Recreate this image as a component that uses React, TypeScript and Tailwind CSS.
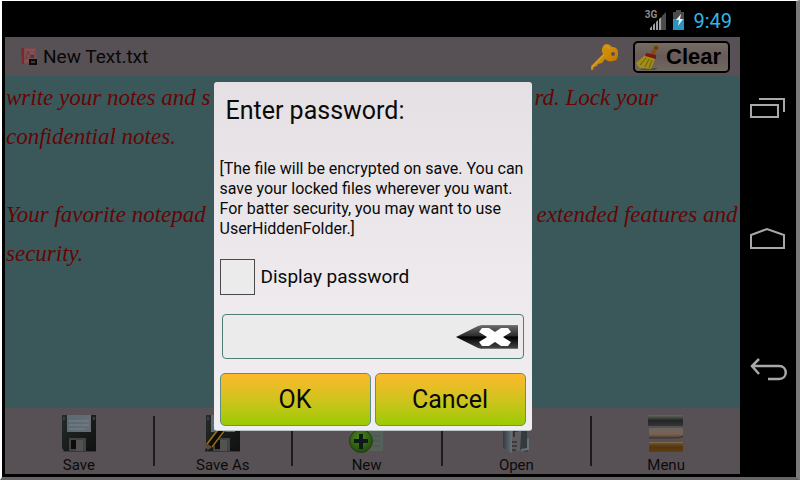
import type { ReactNode } from "react";

function SaveIcon({ pencil = false }: { pencil?: boolean }) {
  return (
    <svg className="h-10 w-9" viewBox="0 0 36 40" aria-hidden="true">
      <defs>
        <linearGradient id="disk" x1="0" y1="0" x2="1" y2="1">
          <stop offset="0" stopColor="#262a2a" />
          <stop offset="0.6" stopColor="#171a19" />
          <stop offset="1" stopColor="#101211" />
        </linearGradient>
        <linearGradient id="diskLabel" x1="0" y1="0" x2="1" y2="0">
          <stop offset="0" stopColor="#5b6a73" />
          <stop offset="1" stopColor="#666c72" />
        </linearGradient>
      </defs>
      <path d="M1 1h34v36H3l-2-3z" fill="url(#disk)" />
      <path d="M1 37h34v1H3z" fill="#3d3838" />
      <path d="M6 1h24v17H6z" fill="url(#diskLabel)" />
      <path d="M8 7h20M8 11h20M8 15h16" stroke="#77858e" strokeWidth="1" />
      <path d="M2 3h2v3H2zM32 3h2v3h-2z" fill="#3b403f" />
      <path d="M8 24h17v13H8z" fill="#434343" />
      <path d="M10 26h5v9h-5z" fill="#0b0b0b" />
      <path d="M15 26h7v11h-7z" fill="#535151" />
      {pencil && (
        <g>
          <path d="M1 29L17 9l7 4L8 33z" fill="#0c0b09" />
          <path d="M2 30L18 9" stroke="#8f6c1b" strokeWidth="2" />
          <path d="M7 33L23 12" stroke="#8f6c1b" strokeWidth="1.500" />
          <path d="M1 29l6 4-7 5z" fill="#5c4b33" />
          <path d="M1 34l2 2-3 2z" fill="#111" />
        </g>
      )}
    </svg>
  );
}

function NewIcon() {
  return (
    <svg className="h-10 w-9" viewBox="0 0 36 40" aria-hidden="true">
      <defs>
        <radialGradient id="plus" cx="0.45" cy="0.35" r="0.7">
          <stop offset="0" stopColor="#4e8622" />
          <stop offset="1" stopColor="#1d4708" />
        </radialGradient>
      </defs>
      <path d="M8 4h26v33H14z" fill="#56605a" />
      <path d="M24 22h7M24 27h7M24 32h7" stroke="#49544e" />
      <circle cx="12" cy="27" r="11.500" fill="url(#plus)" stroke="#263d17" />
      <path d="M10 20h4v5h5v4h-5v6h-4v-6H5v-4h5z" fill="#0e1a17" />
    </svg>
  );
}

function OpenIcon() {
  return (
    <svg className="h-10 w-9" viewBox="0 0 36 40" aria-hidden="true">
      <defs>
        <linearGradient id="folder" x1="0" y1="0" x2="1" y2="0">
          <stop offset="0" stopColor="#343b42" />
          <stop offset="1" stopColor="#67727b" />
        </linearGradient>
      </defs>
      <path d="M12 4h17v33H12z" fill="#5e5c5f" />
      <path d="M5 4l9 8v27L5 34z" fill="url(#folder)" />
      <path d="M24 6h5v18l1 14-8-2z" fill="#333a40" />
      <path d="M29 25l2-1v12l-8 1v-2l6-1z" fill="#66717a" />
      <path d="M15 17h5M16 17v6M14 28h5M14 32h5M14 36h4" stroke="#1a1c1e" strokeWidth="1.200" />
    </svg>
  );
}

function MenuIcon() {
  return (
    <svg className="h-10 w-9" viewBox="0 0 36 40" aria-hidden="true">
      <defs>
        <linearGradient id="bar1" x1="0" y1="0" x2="0" y2="1">
          <stop offset="0" stopColor="#65675f" />
          <stop offset="0.5" stopColor="#222624" />
          <stop offset="1" stopColor="#333634" />
        </linearGradient>
        <linearGradient id="bar2" x1="0" y1="0" x2="0" y2="1">
          <stop offset="0" stopColor="#6a685f" />
          <stop offset="0.6" stopColor="#7b6152" />
          <stop offset="1" stopColor="#4d4039" />
        </linearGradient>
        <linearGradient id="bar3" x1="0" y1="0" x2="0" y2="1">
          <stop offset="0" stopColor="#705a38" />
          <stop offset="0.5" stopColor="#54350d" />
          <stop offset="1" stopColor="#5e4012" />
        </linearGradient>
      </defs>
      <rect x="0" y="1" width="35" height="11" rx="1" fill="url(#bar1)" />
      <rect x="1" y="14" width="34" height="10" rx="1" fill="url(#bar2)" />
      <path d="M1 24h27q4 0 7-2" stroke="#3a332e" fill="none" />
      <rect x="1" y="28" width="34" height="10" rx="1" fill="url(#bar3)" />
      <path d="M1 28.500h34" stroke="#7c6a48" />
    </svg>
  );
}

function FileIcon() {
  return (
    <svg className="h-5 w-4" viewBox="0 0 16 20" aria-hidden="true">
      <path d="M0 1h15v16H1z" fill="#7b4a4d" />
      <path d="M0 1h3v16H1z" fill="#742c31" />
      <path d="M4 3h10M5 6h8M5 9h3M4 14h4" stroke="#96575c" />
      <path d="M5 12l2-8 3 7" stroke="#643a45" fill="none" />
      <path d="M10 8h3v3h-3z" fill="#3f3861" />
      <path d="M8 12h8v6H8z" fill="#0d0b0c" />
      <path d="M10 15h4" stroke="#77706f" />
    </svg>
  );
}

function KeyIcon() {
  return (
    <svg className="h-7 w-8" viewBox="0 0 32 28" aria-hidden="true">
      <defs>
        <linearGradient id="key" x1="0" y1="0" x2="1" y2="1">
          <stop offset="0" stopColor="#c9951c" />
          <stop offset="0.5" stopColor="#cf8a04" />
          <stop offset="1" stopColor="#b86808" />
        </linearGradient>
      </defs>
      <path
        fillRule="evenodd"
        d="M15 2c2-2 6-1 8 2 4 0 6 2 6 6 0 5-1 8-5 8-3 1-6 0-8-2l-3 4-4 1-1 2-3 1-1 3H2v-4L14 11c-2-3-1-7 1-9zM24 9a2 2 0 1 0 .1 0z"
        fill="url(#key)"
      />
      <path d="M3 24L15 12M16 4c2-1 4 0 5 2" stroke="#d8a93a" fill="none" />
    </svg>
  );
}

function BroomIcon() {
  return (
    <svg className="h-7 w-7" viewBox="0 0 28 28" aria-hidden="true">
      <path d="M8 25h15l-3 2H5z" fill="#574c3d" />
      <path d="M15 11l3-5c0-4 4-5 6-2 1 2-1 3-3 4l-2 5z" fill="#7c5119" />
      <circle cx="21" cy="5" r="1" fill="#3f270a" />
      <path d="M10 12L1 20l2 3 2 2 11 1 4-10z" fill="#a08d17" />
      <path d="M11 15l-6 7M14 16l-4 8M17 17l-3 8" stroke="#6d5d08" />
      <path d="M11 10l10 2v4l-11-3z" fill="#7c1712" />
    </svg>
  );
}

function StatusIcons() {
  return (
    <div className="flex items-start text-[#8c8c8c]">
      <span className="text-[10px] leading-3 font-bold">3G</span>
      <svg className="-ml-2 h-6 w-9" viewBox="0 0 36 24" aria-hidden="true">
        <path d="M17 3v18h-4V7z" fill="#4c4c4c" />
        <path d="M1 19v2h2v-4zM4 16v5h2v-7zM7 13v8h2V11zM10 10v11h2.500V8z" fill="#a0a0a0" />
        <path d="M27 1h5v2h3v8H24V3h3z" fill="#4b4b4b" />
        <path d="M24 10h11v11H24z" fill="#2c93bd" />
        <path d="M32 5l-5 6h3l-1 6 5-7h-3z" fill="#e8f4f8" />
      </svg>
    </div>
  );
}

function BackspaceIcon() {
  return (
    <svg className="h-7 w-16" viewBox="0 0 64 28" aria-hidden="true">
      <defs>
        <linearGradient id="erase" x1="0" y1="0" x2="0" y2="1">
          <stop offset="0" stopColor="#6b6b6b" />
          <stop offset="0.450" stopColor="#2d2d2d" />
          <stop offset="0.500" stopColor="#000" />
          <stop offset="1" stopColor="#4a4a4a" />
        </linearGradient>
      </defs>
      <path d="M1 14L23 3l4-1h36v24H27l-4-1z" fill="url(#erase)" />
      <path d="M27 2.500h36M27 25.500h36" fill="none" stroke="#777" />
      <path
        d="M24 9l3-4h7l6 4 6-4h7l3 4-8 5 8 5-3 4h-7l-6-4-6 4h-7l-3-4 8-5z"
        fill="#fff"
      />
    </svg>
  );
}

function NavButton({ label, children }: { label: string; children: ReactNode }) {
  return (
    <button type="button" aria-label={label} className="flex h-8 w-10 items-center justify-center">
      <svg className="h-8 w-10" viewBox="0 0 40 32" fill="none" stroke="#a8a8a8" strokeWidth="2" aria-hidden="true">
        {children}
      </svg>
    </button>
  );
}

function Toolbar() {
  const item = "flex flex-1 flex-col items-center border-r-2 border-[#1d1a1c]";

  return (
    <nav className="flex h-[66px] bg-[#575054] py-2 text-[15px] leading-4 text-[#0c0b0b]">
      <button type="button" className={item}>
        <span className="-mt-0.5 mb-[3px]"><SaveIcon /></span>
        Save
      </button>
      <button type="button" className="flex w-[138px] flex-col items-center border-r-2 border-[#1d1a1c]">
        <span className="-mt-0.5 mb-[3px]"><SaveIcon pencil /></span>
        Save As
      </button>
      <button type="button" className={item}>
        <span className="-mt-0.5 mb-[3px]"><NewIcon /></span>
        New
      </button>
      <button type="button" className={item}>
        <span className="-mt-0.5 mb-[3px]"><OpenIcon /></span>
        Open
      </button>
      <button type="button" className="flex flex-1 flex-col items-center">
        <span className="-mt-0.5 mb-[3px]"><MenuIcon /></span>
        Menu
      </button>
    </nav>
  );
}

function PasswordDialog() {
  const button =
    "h-[53px] flex-1 rounded-[5px] border border-[#5f8f86] bg-linear-to-b from-[#fdb82c] to-[#9acb00] text-[25px] leading-8";

  return (
    <form
      role="dialog"
      aria-labelledby="dialog-title"
      className="w-[318px] rounded-[3px] border-b border-[#b9c8c4] bg-linear-to-b from-[#e4e0e3] via-[#ece8eb] to-[#f1edf1] px-1.5 pt-[13px] pb-1 text-[#0a0a0a]"
    >
      <h2 id="dialog-title" className="px-1.5 text-[25px] leading-8">Enter password:</h2>
      <p className="mt-8 text-base leading-5 whitespace-nowrap">
        [The file will be encrypted on save. You can
        <br />
        save your locked files wherever you want.
        <br />
        For batter security, you may want to use
        <br />
        UserHiddenFolder.]
      </p>
      <label className="mt-5 flex items-center gap-1.5 text-[19px]">
        <input
          type="checkbox"
          className="h-9 w-[35px] appearance-none border border-[#4a4a4a] bg-[#ebebeb]"
        />
        Display password
      </label>
      <div className="mx-0.5 mt-[19px] flex h-[45px] items-center rounded-[4px] border border-[#4f7d70] bg-[#ebebeb] pr-1">
        <input type="password" aria-label="Password" className="min-w-0 flex-1 bg-transparent px-2 outline-none" />
        <button type="button" aria-label="Clear password">
          <BackspaceIcon />
        </button>
      </div>
      <div className="mt-[14px] flex gap-1">
        <button type="submit" className={button}>OK</button>
        <button type="button" className={button}>Cancel</button>
      </div>
    </form>
  );
}

export default function App() {
  return (
    <div className="flex min-h-screen border-t border-r-4 border-b-3 border-l-2 border-t-white border-r-[#7a7a7a] border-b-[#666] border-l-white bg-black font-[Roboto,sans-serif]">
      <div className="flex min-w-0 flex-1 flex-col pb-[3px] pl-[3px]">
        <header className="flex h-9 items-center justify-end gap-2 pt-1 pr-2">
          <StatusIcons />
          <time className="text-xl text-[#33b5e5]">9:49</time>
        </header>

        <main className="relative flex flex-1 flex-col bg-[#3a5859]">
          <div className="flex h-[39px] items-center bg-[#575054] pr-2.5 pl-4">
            <FileIcon />
            <h1 className="ml-1.5 flex-1 pt-0.5 text-[19px] text-[#080808]">New Text.txt</h1>
            <button type="button" aria-label="Lock file" className="mr-3">
              <KeyIcon />
            </button>
            <button
              type="button"
              className="flex h-8 w-[97px] items-center gap-[3px] rounded-[5px] border-2 border-black bg-linear-to-b from-[#756c62] via-[#6a5a58] to-[#706a60] font-['Liberation_Sans',sans-serif] text-[22px] font-bold text-black"
            >
              <BroomIcon />
              Clear
            </button>
          </div>

          <div className="flex-1 pl-px font-['Liberation_Serif',serif] text-[23px] leading-[39px] whitespace-nowrap text-[#670404] italic">
            <p className="flex pt-0.5">
              <span className="w-[72%]">write your notes and s</span>
              <span>rd. Lock your</span>
            </p>
            <p>confidential notes.</p>
            <p className="mt-[39px] flex">
              <span className="w-[72%]">Your favorite notepad</span>
              <span className="pl-0.5">extended features and</span>
            </p>
            <p>security.</p>
          </div>

          <Toolbar />

          <div className="absolute inset-0 flex items-center justify-center pt-0.5">
            <PasswordDialog />
          </div>
        </main>
      </div>

      <nav aria-label="System" className="flex w-14 flex-col items-center justify-center gap-[99px]">
        <NavButton label="Recent apps">
          <path d="M3 13h27v12H3zM11 7h25v13" />
        </NavButton>
        <NavButton label="Home">
          <path d="M3 25V12l16-6 17 6v13z" />
        </NavButton>
        <NavButton label="Back">
          <path d="M11 5l-7 7 7 8M4 12h27c9 0 9 13 0 13H20" strokeWidth="2.500" />
        </NavButton>
      </nav>
    </div>
  );
}
